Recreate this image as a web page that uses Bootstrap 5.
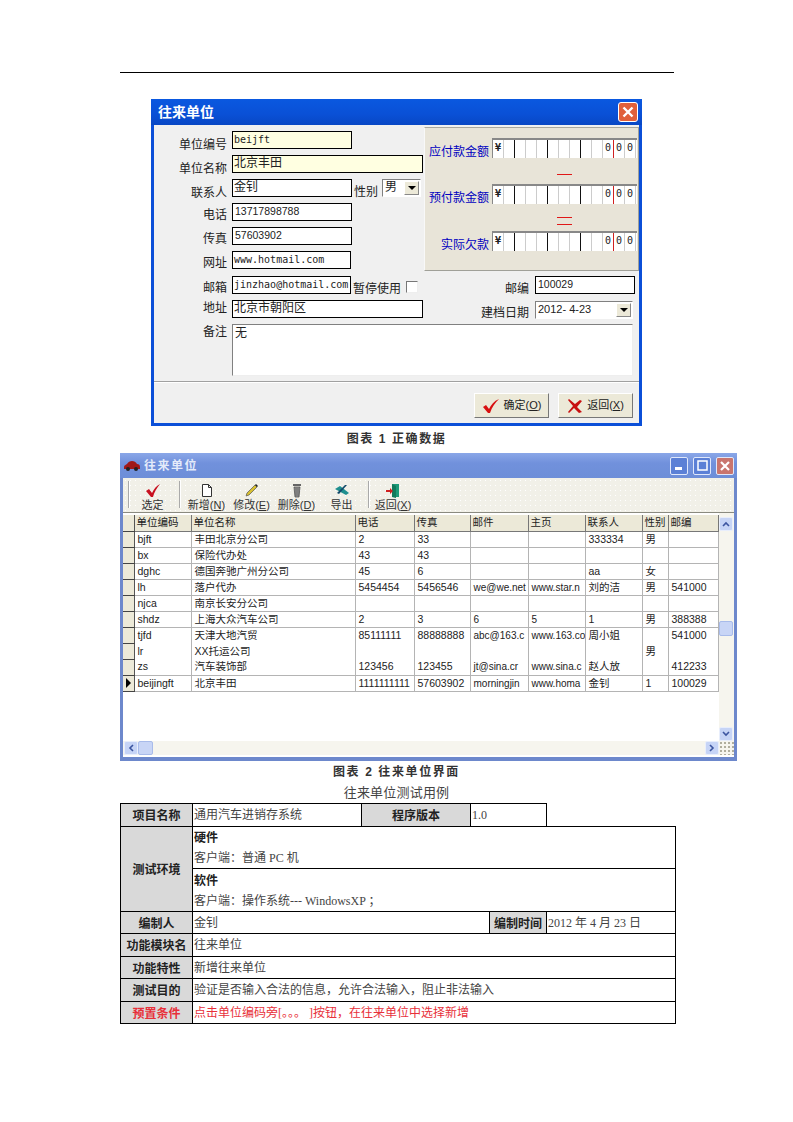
<!DOCTYPE html>
<html lang="zh-CN">
<head>
    <meta charset="UTF-8">
    <meta name="viewport" content="width=device-width, initial-scale=1.0">
    <title>往来单位测试用例</title>
    <link href="https://cdn.jsdelivr.net/npm/bootstrap@5.3.0/dist/css/bootstrap.min.css" rel="stylesheet">
    <style>
        body {
            background: #fff;
            color: #222;
            font-family: "Liberation Sans", "Noto Sans CJK SC", sans-serif;
            font-size: 12px;
            width: 793px;
        }
        .top-rule { height: 1px; background: #000; margin: 72px 119px 0 120px; }

        /* first dialog */
        .dlg { width: 491px; height: 327px; margin: 26px 0 0 151px; background: #f0f0f0; border: solid #0b4fd8; border-width: 0 3px 3px; }
        .dlg-title { height: 26px; margin: 0 -3px; padding: 0 4px 0 7px; background: linear-gradient(180deg, #0a58e0, #0a50d6 60%, #0847c4); color: #fff; font-size: 14px; font-weight: 700; }
        .dlg-close { width: 20px; height: 20px; border: 1px solid #fff; border-radius: 3px; background: #e0603a; }
        .dlg-body { padding: 2px 0 0 0; }
        .frow { height: 18px; }
        .flabel { width: 73px; margin-top: 3px; margin-right: 5px; text-align: right; line-height: 18px; color: #222; flex: none; }
        .fl-lo { margin-top: 5px; }
        .fl-hi { margin-top: -1px; }
        .fld { height: 18px; border: 1px solid #000; background: #fff; line-height: 15px; padding-left: 1px; white-space: nowrap; overflow: hidden; flex: none; }
        .fld-y { background: #ffffe1; }
        .mono { font-family: "DejaVu Sans Mono", monospace; font-size: 10px; }
        .num { font-size: 10.5px; padding-left: 2px; }
        .w-120 { width: 120px; }
        .w-119 { width: 119px; }
        .w-191 { width: 191px; }
        .w-100px { width: 100px; }
        .w-combo { width: 39px; }
        .left-rows { width: 270px; padding-top: 4px; gap: 6px; flex: none; }
        .side-txt { margin: 4px 4px 0 2px; white-space: nowrap; }
        .combo { height: 18px; background: #fff; border: 1px solid; border-color: #808080 #fff #fff #808080; flex: none; line-height: 15px; padding-left: 2px; }
        .combo-date { width: 98px; margin-right: 6px; margin-top: 1px; font-size: 11px; }
        .combo-btn { width: 15px; height: 14px; margin: 1px 1px 0 auto; background: #ece9d8; border: 1px solid; border-color: #fff #888 #888 #fff; }
        .tri-d { width: 0; height: 0; border: 4px solid transparent; border-top: 4px solid #000; border-bottom: 0; }
        .amount-box { width: 215px; height: 144px; background: #e8e4d8; border: 1px solid; border-color: #a8a8a0 #a0a098 #a0a098 #f8f8f8; padding-top: 10px; flex: none; }
        .amount-row { height: 20px; }
        .amount-lbl { width: 64px; text-align: right; color: #0000c0; padding-top: 6px; margin-right: 3px; line-height: 16px; flex: none; }
        .ledger { width: 145px; height: 20px; background: #fff; border-top: 2px solid #888; border-left: 1px solid #888; flex: none; }
        .lcell { width: 11px; height: 18px; border-right: 1px solid #ccc; font-size: 10px; line-height: 16px; text-align: center; font-family: "DejaVu Sans Mono", monospace; flex: none; }
        .lcell-yen { font-weight: 700; }
        .lcell-k { border-right-color: #111; }
        .lcell-r { border-right-color: #d02020; }
        .op-sign { height: 26px; width: 145px; margin-left: 67px; padding-top: 6px; }
        .op-sign-2 { height: 27px; padding-top: 7px; gap: 6px; }
        .bar-red { width: 15px; height: 1px; background: #e01818; flex: none; }
        .chk { width: 12px; height: 12px; margin: 5px 0 0 5px; border: 1px solid; border-color: #777 #eee #eee #777; background: #fff; flex: none; }
        .after-panel { margin-top: 5px; }
        .mt-field { margin-top: 6px; }
        .me-field { margin-right: 4px; }
        .right-lbl { margin: 4px 6px 0 auto; white-space: nowrap; }
        .dlg-sep { height: 2px; margin-top: 5px; background: #a0a0a0; border-bottom: 1px solid #fff; }
        .memo { width: 401px; height: 52px; background: #fff; border: 1px solid; border-color: #808080 #eee #eee #808080; padding: 1px 2px; line-height: 15px; flex: none; }
        .dlg-foot { padding: 10px 6px 0 0; gap: 9px; }
        .xp-btn { width: 75px; height: 25px; background: #ece9d8; border: 1px solid; border-color: #fff #777 #777 #fff; font-size: 11px; gap: 4px; }

        .fig-cap { text-align: center; font-weight: 700; letter-spacing: 1.6px; color: #333; height: 27px; line-height: 27px; }
        .cap-2 { height: 21px; line-height: 22px; }

        /* second window */
        .win { width: 617px; height: 308px; margin-left: 120px; background: #fff; border: solid #6d88cc; border-width: 0 3px 4px; }
        .win-title { height: 25px; margin: 0 -3px; padding: 0 3px; background: linear-gradient(180deg, #8aa7e8, #7191dc 40%, #6d8ed8); color: #e4ebfa; font-size: 12px; font-weight: 700; letter-spacing: 1.5px; gap: 3px; }
        .win-btn { width: 18px; height: 18px; margin-left: 2px; border: 1px solid #dfe7fa; border-radius: 2px; background: #5b80d6; }
        .win-btn-x { background: #c9756e; }
        .toolbar {
            height: 35px;
            padding: 5px 0 0 5px;
            background-color: #f1f0e8;
            background-image: radial-gradient(#d8d7cd 0.6px, transparent 0.7px), radial-gradient(#fff 0.6px, transparent 0.7px);
            background-size: 4px 4px, 5px 5px;
            border-bottom: 1px solid #8a8a80;
        }
        .tb-sep { width: 2px; height: 27px; margin-top: -2px; border-left: 1px solid #aaa; border-right: 1px solid #fff; flex: none; }
        .tb-item { height: 29px; font-size: 11px; line-height: 12px; text-align: center; color: #333; flex: none; }
        .tb-item svg { display: block; margin: 0 auto 1px; }
        .tb-first { width: 49px; padding-right: 4px; }
        .tb-45 { width: 45px; }
        .tb-start { margin-left: 3px; }
        .tb-end { margin-right: 4px; }
        .tb-back { width: 46px; }
        .grid-area { height: 228px; }
        .data-grid { width: 595px; margin-top: 2px; table-layout: fixed; border-collapse: collapse; font-size: 10.5px; color: #222; }
        .data-grid th, .data-grid td { height: 16px; padding: 0 0 0 3px; border: solid #b4b4b4; border-width: 0 1px 1px 0; white-space: nowrap; overflow: hidden; line-height: 15px; font-weight: 400; }
        .data-grid td:nth-child(6), .data-grid td:nth-child(7) { font-size: 10px; }
        .data-grid th { padding-left: 2px; background: #ece9d8; border-color: #777; }
        .data-grid .ind { padding: 0; background: #ece9d8; border-color: #555; border-bottom-color: #444; }
        .data-grid .no-b { border-bottom: 0; }
        .cw-ind { width: 11px; }
        .cw-1 { width: 57px; }
        .cw-2 { width: 164px; }
        .cw-3 { width: 59px; }
        .cw-4 { width: 56px; }
        .cw-5 { width: 58px; }
        .cw-6 { width: 57px; }
        .cw-7 { width: 57px; }
        .cw-8 { width: 26px; }
        .cw-9 { width: 50px; }
        .tri-r { width: 0; height: 0; margin-left: 3px; border: 5px solid transparent; border-left: 5px solid #000; border-right: 0; }
        .vscroll { width: 15px; margin-left: auto; background: #f6f5ee; flex: none; }
        .sb-btn { width: 14px; height: 14px; background: #c6d4f6; border: 1px solid #e8eefc; border-radius: 2px; flex: none; }
        .sb-thumb { width: 14px; height: 15px; margin-top: 90px; background: #c8d5f6; border: 1px solid #a8bbea; border-radius: 2px; }
        .hscroll { height: 14px; background: #f6f5ee; padding-left: 1px; }
        .sb-thumb-h { width: 15px; height: 14px; background: #c8d5f6; border: 1px solid #a8bbea; border-radius: 2px; }
        .grip { width: 15px; height: 14px; background-image: radial-gradient(#b0ae9e 0.8px, transparent 1px); background-size: 4px 4px; }

        .case-title { text-align: center; font-size: 13px; color: #444; letter-spacing: .2px; height: 21px; line-height: 22px; }

        /* test case table */
        .case-tbl { width: 555px; margin: 0 0 0 120px; table-layout: fixed; border-collapse: collapse; font-family: "Liberation Serif", "Noto Sans CJK SC", serif; color: #444; }
        .case-tbl td { border: 1px solid #000; padding: 0 1px; line-height: 20px; vertical-align: middle; overflow: hidden; }
        .case-tbl td.hd { background: #d9d9d9; font-weight: 700; text-align: center; color: #222; font-family: "Noto Sans CJK SC", sans-serif; }
        .case-tbl td.blank { border: 0; }
        .case-tbl tr.pre td { color: #e8303a; }
        .case-tbl td strong { color: #222; font-family: "Noto Sans CJK SC", sans-serif; }
        .h-23 { height: 23px; }
        .h-22 { height: 22px; }
        .h-42 { height: 42px; }
        .h-43 { height: 43px; }
        .tw-1 { width: 72px; }
        .tw-2 { width: 169px; }
        .tw-3 { width: 109px; }
        .tw-4 { width: 19px; }
        .tw-5 { width: 57px; }
        .tw-6 { width: 129px; }
    </style>
</head>
<body class="m-0">
    <div class="top-rule"></div>

    <div class="dlg">
        <div class="dlg-title d-flex align-items-center justify-content-between">
            <span>往来单位</span>
            <div class="dlg-close d-flex align-items-center justify-content-center">
                <svg width="12" height="12" viewBox="0 0 12 12"><path d="M1.5 1.5l9 9M10.5 1.5l-9 9" stroke="#fff" stroke-width="2.4"/></svg>
            </div>
        </div>
        <div class="dlg-body">
            <div class="d-flex">
                <div class="left-rows d-flex flex-column">
                    <div class="frow d-flex"><span class="flabel fl-lo">单位编号</span><div class="fld fld-y w-120 mono">beijft</div></div>
                    <div class="frow d-flex"><span class="flabel fl-lo">单位名称</span><div class="fld fld-y w-191">北京丰田</div></div>
                    <div class="frow d-flex"><span class="flabel fl-lo">联系人</span><div class="fld w-120">金钊</div><span class="side-txt">性别</span>
                        <div class="combo d-flex w-combo">男<div class="combo-btn d-flex align-items-center justify-content-center"><div class="tri-d"></div></div></div>
                    </div>
                    <div class="frow d-flex"><span class="flabel">电话</span><div class="fld w-120 num">13717898788</div></div>
                    <div class="frow d-flex"><span class="flabel">传真</span><div class="fld w-120 num">57603902</div></div>
                    <div class="frow d-flex"><span class="flabel">网址</span><div class="fld w-119 mono">www.hotmail.com</div></div>
                </div>
                <div class="amount-box">
                    <div class="amount-row d-flex"><span class="amount-lbl">应付款金额</span><div class="ledger d-flex"></div></div>
                    <div class="op-sign d-flex flex-column align-items-center justify-content-center"><div class="bar-red"></div></div>
                    <div class="amount-row d-flex"><span class="amount-lbl">预付款金额</span><div class="ledger d-flex"></div></div>
                    <div class="op-sign op-sign-2 d-flex flex-column align-items-center justify-content-center"><div class="bar-red"></div><div class="bar-red"></div></div>
                    <div class="amount-row d-flex"><span class="amount-lbl">实际欠款</span><div class="ledger d-flex"></div></div>
                </div>
            </div>
            <div class="frow d-flex after-panel"><span class="flabel">邮箱</span><div class="fld w-119 mono">jinzhao@hotmail.com</div>
                <span class="side-txt me-0">暂停使用</span><div class="chk"></div>
                <span class="right-lbl">邮编</span><div class="fld w-100px me-field num">100029</div>
            </div>
            <div class="frow d-flex mt-field"><span class="flabel fl-hi">地址</span><div class="fld w-191">北京市朝阳区</div>
                <span class="right-lbl">建档日期</span>
                <div class="combo d-flex combo-date">2012- 4-23<div class="combo-btn d-flex align-items-center justify-content-center"><div class="tri-d"></div></div></div>
            </div>
            <div class="d-flex mt-field">
                <span class="flabel fl-hi">备注</span><div class="memo">无</div>
            </div>
            <div class="dlg-sep"></div>
            <div class="dlg-foot d-flex justify-content-end">
                <div class="xp-btn d-flex align-items-center justify-content-center">
                    <svg width="18" height="16" viewBox="0 0 18 16"><path d="M1 9l3-2 3 4C9 7 12 3 17 1c-4 4-7 8-9 14h-2z" fill="#d81010"/></svg>
                    <span>确定(<u>O</u>)</span>
                </div>
                <div class="xp-btn d-flex align-items-center justify-content-center">
                    <svg width="16" height="16" viewBox="0 0 16 16"><path d="M2 1l6 5 5-4 2 1-5 6 5 5-3 1-5-5-5 5-1-1 5-6-5-6z" fill="#c81010"/></svg>
                    <span>返回(<u>X</u>)</span>
                </div>
            </div>
        </div>
    </div>
    <div class="fig-cap">图表 1 正确数据</div>

    <div class="win d-flex flex-column">
        <div class="win-title d-flex align-items-center">
            <svg width="18" height="11" viewBox="0 0 18 11"><path d="M1 7c0-2 2-2 3-3 1-2 3-3 5-3s4 1 5 3c2 0 3 1 3 3v2H1z" fill="#a01818"/><circle cx="5" cy="9" r="2" fill="#222"/><circle cx="13" cy="9" r="2" fill="#222"/></svg>
            <span>往来单位</span>
            <div class="win-btn d-flex align-items-end justify-content-center ms-auto pb-1"><svg width="8" height="3"><rect width="7" height="3" fill="#fff"/></svg></div>
            <div class="win-btn d-flex align-items-center justify-content-center"><svg width="11" height="11"><rect x="1" y="1" width="9" height="9" fill="none" stroke="#fff" stroke-width="1.5"/></svg></div>
            <div class="win-btn win-btn-x d-flex align-items-center justify-content-center"><svg width="12" height="12" viewBox="0 0 12 12"><path d="M2 2l8 8M10 2l-8 8" stroke="#fff" stroke-width="2.2"/></svg></div>
        </div>
        <div class="toolbar d-flex">
            <div class="tb-sep"></div>
            <div class="tb-item tb-first">
                <svg width="16" height="15" viewBox="0 0 16 15"><path d="M1 8l3-2 3 4c2-4 4-7 8-9-3 4-6 8-7 13H6z" fill="#c81020"/></svg>选定
            </div>
            <div class="tb-sep"></div>
            <div class="tb-item tb-45 tb-start">
                <svg width="12" height="15" viewBox="0 0 12 15"><path d="M1.5 1.5h6l3 3v9h-9z M7.5 1.5v3h3" fill="#fff" stroke="#333"/></svg>新增(<u>N</u>)
            </div>
            <div class="tb-item tb-45">
                <svg width="15" height="15" viewBox="0 0 15 15"><path d="M2 13l1-3 8-8 2 2-8 8z" fill="#d8c030" stroke="#555" stroke-width=".7"/><path d="M11 2l2 2 1-1-2-2z" fill="#222"/></svg>修改(<u>E</u>)
            </div>
            <div class="tb-item tb-45">
                <svg width="12" height="15" viewBox="0 0 12 15"><path d="M2 1h8v2H2z" fill="#666"/><path d="M3 4h6l-1 10H4z" fill="#999" stroke="#444" stroke-width=".7"/><path d="M5 5v8M7 5v8" stroke="#444" stroke-width=".6"/></svg>删除(<u>D</u>)
            </div>
            <div class="tb-item tb-45 tb-end">
                <svg width="16" height="15" viewBox="0 0 16 15"><path d="M1 6l5-3 9 7-3 2z" fill="#1f8f8f"/><path d="M13 2L5 11l-2-1 8-8z" fill="#124a6a"/></svg>导出
            </div>
            <div class="tb-sep"></div>
            <div class="tb-item tb-back">
                <svg width="16" height="15" viewBox="0 0 16 15"><path d="M7 1h7v13H7z" fill="#1c9a78"/><path d="M7 1l4 2v12l-4-1z" fill="#127a5c"/><path d="M1 7h4V5l3 3-3 3V9H1z" fill="#d02020"/></svg>返回(<u>X</u>)
            </div>
        </div>
        <div class="grid-area d-flex bg-white">
            <table class="data-grid align-self-start">
                <colgroup><col class="cw-ind"><col class="cw-1"><col class="cw-2"><col class="cw-3"><col class="cw-4"><col class="cw-5"><col class="cw-6"><col class="cw-7"><col class="cw-8"><col class="cw-9"></colgroup>
                <thead><tr><th class="ind"></th><th>单位编码</th><th>单位名称</th><th>电话</th><th>传真</th><th>邮件</th><th>主页</th><th>联系人</th><th>性别</th><th>邮编</th></tr></thead>
                <tbody>
                    <tr><td class="ind"></td><td>bjft</td><td>丰田北京分公司</td><td>2</td><td>33</td><td></td><td></td><td>333334</td><td>男</td><td></td></tr>
                    <tr><td class="ind"></td><td>bx</td><td>保险代办处</td><td>43</td><td>43</td><td></td><td></td><td></td><td></td><td></td></tr>
                    <tr><td class="ind"></td><td>dghc</td><td>德国奔驰广州分公司</td><td>45</td><td>6</td><td></td><td></td><td>aa</td><td>女</td><td></td></tr>
                    <tr><td class="ind"></td><td>lh</td><td>落户代办</td><td>5454454</td><td>5456546</td><td>we@we.net</td><td>www.star.n</td><td>刘的洁</td><td>男</td><td>541000</td></tr>
                    <tr><td class="ind"></td><td>njca</td><td>南京长安分公司</td><td></td><td></td><td></td><td></td><td></td><td></td><td></td></tr>
                    <tr><td class="ind"></td><td>shdz</td><td>上海大众汽车公司</td><td>2</td><td>3</td><td>6</td><td>5</td><td>1</td><td>男</td><td>388388</td></tr>
                    <tr><td class="ind"></td><td class="no-b">tjfd</td><td class="no-b">天津大地汽贸</td><td class="no-b">85111111</td><td class="no-b">88888888</td><td class="no-b">abc@163.c</td><td class="no-b">www.163.co</td><td class="no-b">周小姐</td><td class="no-b"></td><td class="no-b">541000</td></tr>
                    <tr><td class="ind"></td><td class="no-b">lr</td><td class="no-b">XX托运公司</td><td class="no-b"></td><td class="no-b"></td><td class="no-b"></td><td class="no-b"></td><td class="no-b"></td><td class="no-b">男</td><td class="no-b"></td></tr>
                    <tr><td class="ind"></td><td>zs</td><td>汽车装饰部</td><td>123456</td><td>123455</td><td>jt@sina.cr</td><td>www.sina.c</td><td>赵人放</td><td></td><td>412233</td></tr>
                    <tr><td class="ind"><div class="tri-r"></div></td><td>beijingft</td><td>北京丰田</td><td>1111111111</td><td>57603902</td><td>morningjin</td><td>www.homa</td><td>金钊</td><td>1</td><td>100029</td></tr>
                </tbody>
            </table>
            <div class="vscroll d-flex flex-column">
                <div class="sb-btn d-flex align-items-center justify-content-center mt-1"><svg width="8" height="6"><path d="M1 5l3-3 3 3" fill="none" stroke="#3c55a0" stroke-width="1.6"/></svg></div>
                <div class="sb-thumb"></div>
                <div class="sb-btn d-flex align-items-center justify-content-center mt-auto"><svg width="8" height="6"><path d="M1 1l3 3 3-3" fill="none" stroke="#3c55a0" stroke-width="1.6"/></svg></div>
            </div>
        </div>
        <div class="hscroll d-flex">
            <div class="sb-btn d-flex align-items-center justify-content-center"><svg width="6" height="8"><path d="M5 1L2 4l3 3" fill="none" stroke="#3c55a0" stroke-width="1.6"/></svg></div>
            <div class="sb-thumb-h"></div>
            <div class="sb-btn d-flex align-items-center justify-content-center ms-auto"><svg width="6" height="8"><path d="M1 1l3 3-3 3" fill="none" stroke="#3c55a0" stroke-width="1.6"/></svg></div>
            <div class="grip"></div>
        </div>
    </div>
    <div class="fig-cap cap-2">图表 2 往来单位界面</div>
    <div class="case-title">往来单位测试用例</div>

    <table class="case-tbl">
        <colgroup><col class="tw-1"><col class="tw-2"><col class="tw-3"><col class="tw-4"><col class="tw-5"><col class="tw-6"></colgroup>
        <tbody>
            <tr class="h-23"><td class="hd">项目名称</td><td>通用汽车进销存系统</td><td class="hd">程序版本</td><td colspan="2">1.0</td><td class="blank"></td></tr>
            <tr class="h-42"><td class="hd" rowspan="2">测试环境</td><td colspan="5"><strong>硬件</strong><br>客户端：普通 PC 机</td></tr>
            <tr class="h-43"><td colspan="5"><strong>软件</strong><br>客户端：操作系统--- WindowsXP ；</td></tr>
            <tr class="h-22"><td class="hd">编制人</td><td colspan="3">金钊</td><td class="hd">编制时间</td><td>2012 年 4 月 23 日</td></tr>
            <tr class="h-23"><td class="hd">功能模块名</td><td colspan="5">往来单位</td></tr>
            <tr class="h-22"><td class="hd">功能特性</td><td colspan="5">新增往来单位</td></tr>
            <tr class="h-23"><td class="hd">测试目的</td><td colspan="5">验证是否输入合法的信息，允许合法输入，阻止非法输入</td></tr>
            <tr class="pre h-22"><td class="hd">预置条件</td><td colspan="5">点击单位编码旁[。。。 ]按钮，在往来单位中选择新增</td></tr>
        </tbody>
    </table>

    <script>
        // ledger cells: yen sign, then 12 digit boxes with darker rule every 3
        document.querySelectorAll('.ledger').forEach(ledger => {
            for (let i = 0; i < 13; i++) {
                const cell = document.createElement('div');
                cell.className = 'lcell';
                if (i === 0) { cell.textContent = '¥'; cell.classList.add('lcell-yen'); }
                if (i >= 10) cell.textContent = '0';
                if (i === 1 || i === 4 || i === 7) cell.classList.add('lcell-k');
                if (i === 10) cell.classList.add('lcell-r');
                ledger.appendChild(cell);
            }
        });
    </script>
    <script src="https://cdn.jsdelivr.net/npm/bootstrap@5.3.0/dist/js/bootstrap.bundle.min.js"></script>
</body>
</html>
